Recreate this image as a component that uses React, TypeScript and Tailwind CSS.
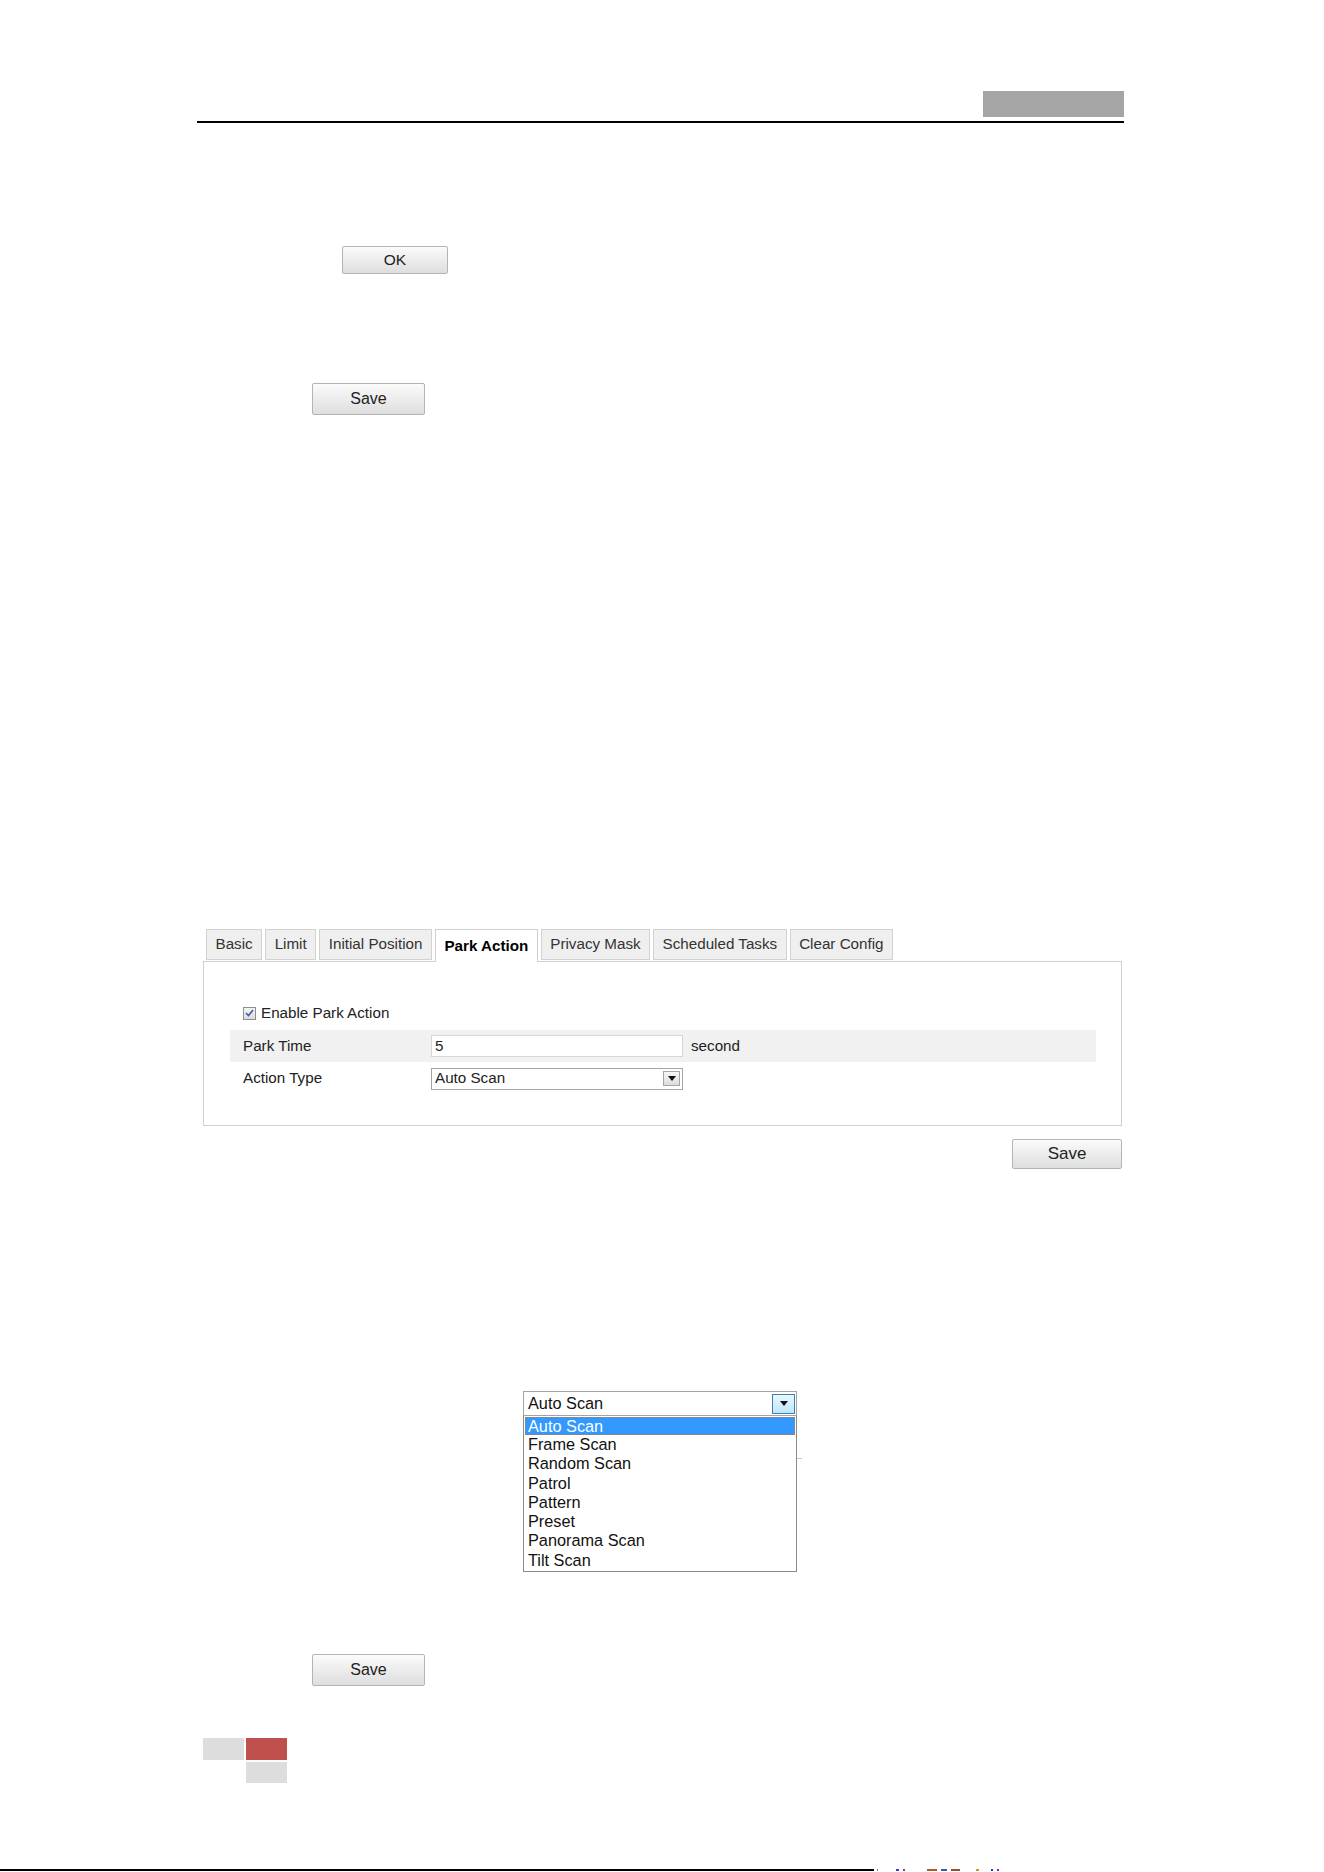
import React from "react";

const tabs = [
  "Basic",
  "Limit",
  "Initial Position",
  "Park Action",
  "Privacy Mask",
  "Scheduled Tasks",
  "Clear Config",
];

const actionTypes = [
  "Auto Scan",
  "Frame Scan",
  "Random Scan",
  "Patrol",
  "Pattern",
  "Preset",
  "Panorama Scan",
  "Tilt Scan",
];

function GrayButton({ label, className }: { label: string; className: string }) {
  return (
    <button
      type="button"
      className={`flex items-center justify-center border border-[#b4b4b4] rounded-[2px] bg-gradient-to-b from-[#fbfbfb] to-[#dedede] text-[#222] ${className}`}
    >
      {label}
    </button>
  );
}

function ArrowDown() {
  return (
    <svg width="8" height="5" viewBox="0 0 8 5">
      <path d="M0 0h8L4 5z" fill="#111" />
    </svg>
  );
}

export default function App() {
  return (
    <div className="w-[1324px] h-[1872px] bg-white font-['Liberation_Sans',Arial,sans-serif] overflow-hidden">
      {/* running header */}
      <div className="pt-[91px] ml-[197px] w-[927px]">
        <div className="flex justify-end">
          <div className="w-[141px] h-[26px] bg-[#a5a5a5]" />
        </div>
        <div className="mt-[4px] h-[2px] bg-black" />
      </div>

      <GrayButton label="OK" className="mt-[123px] ml-[342px] w-[106px] h-[28px] text-[15.5px]" />
      <GrayButton label="Save" className="mt-[109px] ml-[312px] w-[113px] h-[32px] text-[16px]" />

      {/* PTZ park action settings */}
      <div className="mt-[514px] ml-[203px] w-[919px] text-[15.2px]">
        <div className="flex gap-[3px] pl-[3px] h-[33px] relative z-10">
          {tabs.map((t) =>
            t === "Park Action" ? (
              <div
                key={t}
                className="px-[8.5px] h-[33px] flex items-center border border-b-0 border-[#cfcfcf] bg-white font-bold text-black"
              >
                {t}
              </div>
            ) : (
              <div
                key={t}
                className="px-[8.5px] h-[31px] flex items-center border border-[#d2d2d2] bg-[#efefef] text-[#333]"
              >
                {t}
              </div>
            )
          )}
        </div>
        <div className="-mt-px h-[165px] border border-[#cfcfcf] bg-white pt-[44px] pl-[26px] pr-[25px]">
          <div className="flex items-center h-[14px] ml-[13px] gap-[5px] text-[#222]">
            <span className="w-[13px] h-[13px] border border-[#8f8f8f] bg-gradient-to-b from-[#f4f4f4] to-[#dcdcdc] flex items-center justify-center">
              <svg width="9" height="8" viewBox="0 0 9 8">
                <path d="M1 4l2.5 2.5L8 1" stroke="#3a5fa8" strokeWidth="1.6" fill="none" />
              </svg>
            </span>
            <span>Enable Park Action</span>
          </div>
          <div className="mt-[10px] h-[32px] bg-[#f1f1f1] flex items-center pl-[13px] text-[#222]">
            <span className="w-[188px]">Park Time</span>
            <div className="w-[252px] h-[22px] border border-[#d6d6d6] bg-white flex items-center pl-[3px]">5</div>
            <span className="ml-[8px]">second</span>
          </div>
          <div className="h-[33px] flex items-center pl-[13px] text-[#222]">
            <span className="w-[188px]">Action Type</span>
            <div className="w-[252px] h-[22px] border border-[#a5a5a5] bg-white flex items-center justify-between pl-[3px] pr-[2px]">
              <span>Auto Scan</span>
              <span className="w-[17px] h-[15px] border border-[#a5a5a5] bg-gradient-to-b from-[#f6f6f6] to-[#dcdcdc] flex items-center justify-center">
                <ArrowDown />
              </span>
            </div>
          </div>
        </div>
        <div className="flex justify-end mt-[13px]">
          <GrayButton label="Save" className="w-[110px] h-[30px] text-[17px]" />
        </div>
      </div>

      {/* action type drop-down, opened */}
      <div className="mt-[222px] ml-[523px] w-[274px] text-[16.3px] text-[#111] relative">
        <div className="h-[25px] border border-[#a3a3a3] flex items-center justify-between pl-[4px] pr-[1px]">
          <span>Auto Scan</span>
          <span className="w-[23px] h-[20px] border border-[#3c7fb1] bg-gradient-to-b from-[#eaf6fd] to-[#bee6fd] flex items-center justify-center">
            <ArrowDown />
          </span>
        </div>
        <div className="h-[156px] border border-t-0 border-[#8a8a8a] pt-[1px] px-[1px]">
          {actionTypes.map((a, i) =>
            i === 0 ? (
              <div
                key={a}
                className="h-[18px] leading-[18px] pl-[3px] bg-[#3399ff] text-white outline outline-1 outline-dotted outline-[#c77a2c] -outline-offset-1"
              >
                {a}
              </div>
            ) : (
              <div key={a} className="h-[19.3px] leading-[19.3px] pl-[3px]">
                {a}
              </div>
            )
          )}
        </div>
        <div className="absolute left-[274px] top-[67px] w-[5px] h-px bg-[#c8c8c8]" />
      </div>

      <GrayButton label="Save" className="mt-[82px] ml-[312px] w-[113px] h-[32px] text-[16px]" />

      {/* page footer marks */}
      <div className="mt-[52px] ml-[203px] grid grid-cols-[41px_41px] gap-[2px] w-[84px]">
        <div className="h-[22px] bg-[#dddddd]" />
        <div className="h-[22px] bg-[#c0504d]" />
        <div />
        <div className="h-[21px] bg-[#dddddd]" />
      </div>

      <div className="mt-[85px] flex items-center h-[3px]">
        <div className="w-[874px] h-[2px] bg-black" />
        <div className="ml-[3px] flex gap-[4px] items-center">
          <span className="w-px h-[2px] bg-[#2aa0c8]" />
          <span className="ml-[14px] w-[3px] h-[2px] bg-[#3344cc]" />
          <span className="w-[2px] h-[2px] bg-[#7a40a0]" />
          <span className="ml-[18px] w-[10px] h-[2px] bg-[#b05a2a]" />
          <span className="w-[6px] h-[2px] bg-[#3a5a9a]" />
          <span className="w-[9px] h-[2px] bg-[#a04a3a]" />
          <span className="ml-[12px] w-[3px] h-[2px] bg-[#c89a20]" />
          <span className="ml-[8px] w-[2px] h-[2px] bg-[#3030d0]" />
          <span className="w-[2px] h-[2px] bg-[#9020a0]" />
        </div>
      </div>
    </div>
  );
}
